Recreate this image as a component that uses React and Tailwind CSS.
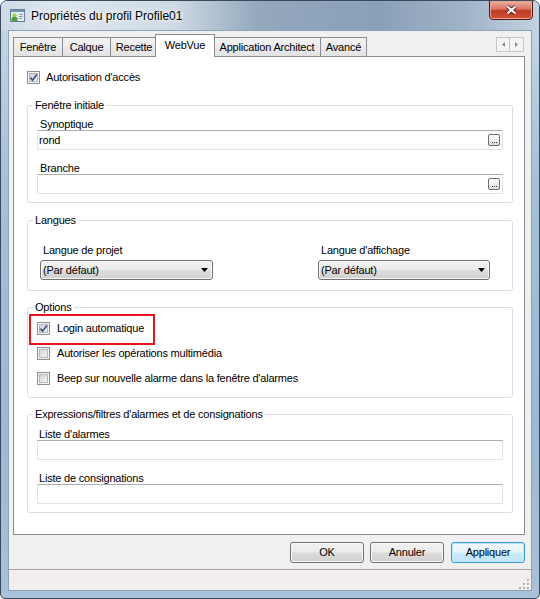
import React from "react";

const tabs = [
  { label: "Fenêtre", w: "w-[49px]" },
  { label: "Calque", w: "w-[48px]" },
  { label: "Recette", w: "w-[47px]" },
  { label: "WebVue", active: true },
  { label: "Application Architect", w: "w-[107px]" },
  { label: "Avancé", w: "w-[47px]", last: true },
];

function Checkbox({ checked }) {
  return (
    <span className="flex h-[13px] w-[13px] shrink-0 items-center justify-center border border-[#8e8f8f] bg-[linear-gradient(135deg,#c9ccd1_0%,#e6e7e9_55%,#f8f8f8_100%)] shadow-[inset_0_0_0_1px_#f4f4f4,inset_0_0_0_2px_#b4b8be]">
      {checked && (
        <svg width="9" height="9" viewBox="0 0 9 9">
          <path d="M1.4 4.6 L3.6 7.2 L7.8 1.4" stroke="#3f5385" strokeWidth="1.7" fill="none" />
        </svg>
      )}
    </span>
  );
}

function Group({ title, className, children }) {
  return (
    <fieldset className={`rounded-[3px] border border-[#d5dfe5] ${className}`}>
      <legend className="ml-[5px] px-[2px] leading-[14px]">{title}</legend>
      <div className="px-[9px]">{children}</div>
    </fieldset>
  );
}

function TextBox({ value, browse }) {
  return (
    <div className="flex h-[20px] items-center border border-[#dfe3ea] border-t-[#abadb3] bg-white pl-[1px] pr-[2px]">
      <span className="flex-1 leading-[14px]">{value}</span>
      {browse && (
        <span className="flex h-[12px] w-[12px] items-end justify-center gap-[1px] rounded-[2px] border border-[#6e6e6e] bg-[linear-gradient(180deg,#ffffff,#dedede)] pb-[2px]">
          <span className="h-px w-px bg-[#333]" />
          <span className="h-px w-px bg-[#333]" />
          <span className="h-px w-px bg-[#333]" />
        </span>
      )}
    </div>
  );
}

function Select({ w }) {
  return (
    <div
      className={`flex h-[20px] ${w} items-center rounded-[3px] border border-[#707070] bg-[linear-gradient(180deg,#f2f2f2_0%,#ebebeb_48%,#dddddd_52%,#cfcfcf_100%)] pl-[2px] pr-[4px] shadow-[inset_0_0_0_1px_#f8f8f8]`}
    >
      <span className="flex-1 leading-[14px]">(Par défaut)</span>
      <svg width="7" height="4" viewBox="0 0 7 4">
        <path d="M0 0 H7 L3.5 4 Z" fill="#000" />
      </svg>
    </div>
  );
}

function Button({ children, primary }) {
  return (
    <div
      className={
        primary
          ? "ml-px flex h-[21px] w-[74px] items-center justify-center rounded-[3px] border border-[#3c9ad6] bg-[linear-gradient(180deg,#f2fafe_0%,#e3f4fc_48%,#cdebfa_52%,#bfe4f7_100%)] shadow-[inset_0_0_0_1px_#b9e6fb]"
          : "flex h-[21px] w-[74px] items-center justify-center rounded-[3px] border border-[#707070] bg-[linear-gradient(180deg,#f2f2f2_0%,#ebebeb_48%,#dddddd_52%,#cfcfcf_100%)] shadow-[inset_0_0_0_1px_#fbfbfb]"
      }
    >
      {children}
    </div>
  );
}

function TitleBar() {
  return (
    <div className="flex h-[29px] shrink-0 items-center bg-[linear-gradient(90deg,#ccd9e6_0%,#dfe7ef_10%,#cfdae5_32%,#93a8bd_48%,#8aa0b7_70%,#9fb3c7_86%,#c4d2e0_100%)] pl-[9px]">
      <svg width="15" height="13" viewBox="0 0 15 13">
        <rect x="0.5" y="0.5" width="14" height="12" fill="#e4edf5" stroke="#6d8194" />
        <rect x="1" y="1" width="13" height="2" fill="#6f95bd" />
        <circle cx="4.5" cy="6.5" r="2.2" fill="#a6d04f" />
        <path d="M1.5 12 V9 Q4.5 6.5 7.5 9 V12 Z" fill="#4f9a3a" />
        <rect x="9" y="5" width="4" height="1" fill="#8d9cab" />
        <rect x="9" y="7" width="4" height="1" fill="#8d9cab" />
        <rect x="9" y="9" width="3" height="1" fill="#8d9cab" />
      </svg>
      <span className="ml-[6px] text-[12px] leading-[16px] tracking-normal [text-shadow:0_0_6px_#fff,0_0_3px_#fff]">
        Propriétés du profil Profile01
      </span>
      <div className="-mt-px mr-[6px] ml-auto flex h-[20px] w-[44px] items-center justify-center self-start rounded-b-[4px] border border-[#4f1a12] bg-[linear-gradient(180deg,#eab0a2_0%,#d9786a_42%,#c13b23_55%,#cf5233_100%)] shadow-[inset_0_0_0_1px_#efa493]">
        <svg width="13" height="10" viewBox="0 0 13 10">
          <path d="M2.5 1.5 L10.5 8.5 M10.5 1.5 L2.5 8.5" stroke="#5a1e16" strokeWidth="4" />
          <path d="M2.5 1.5 L10.5 8.5 M10.5 1.5 L2.5 8.5" stroke="#ffffff" strokeWidth="2.2" />
        </svg>
      </div>
    </div>
  );
}

function TabStrip() {
  return (
    <div className="flex h-[25px] shrink-0 items-end pl-[4px] pr-[7px]">
      {tabs.map((tab) =>
        tab.active ? (
          <div
            key={tab.label}
            className="relative z-10 -mx-[2px] -mb-px flex h-[23px] w-[60px] items-center justify-center border border-b-0 border-[#898c95] bg-white pb-[2px]"
          >
            {tab.label}
          </div>
        ) : (
          <div
            key={tab.label}
            className={`flex h-[19px] ${tab.w} items-center justify-center border-t border-l border-[#898c95] bg-[linear-gradient(180deg,#f3f3f3,#e3e3e3)] ${tab.last ? "border-r" : ""}`}
          >
            {tab.label}
          </div>
        )
      )}
      <div className="mt-[6px] ml-auto flex self-start">
        <div className="flex h-[15px] w-[14px] items-center justify-center border border-[#c7c7c7] bg-[#f4f4f4]">
          <svg width="3" height="5" viewBox="0 0 3 5">
            <path d="M3 0 V5 L0 2.5 Z" fill="#8a8a8a" />
          </svg>
        </div>
        <div className="flex h-[15px] w-[14px] items-center justify-center border border-l-0 border-[#c7c7c7] bg-[#f4f4f4]">
          <svg width="3" height="5" viewBox="0 0 3 5">
            <path d="M0 0 V5 L3 2.5 Z" fill="#8a8a8a" />
          </svg>
        </div>
      </div>
    </div>
  );
}

export default function App() {
  return (
    <div className="flex h-[599px] w-[540px] flex-col overflow-hidden rounded-t-[7px] rounded-b-[5px] border border-[#394a5d] bg-[linear-gradient(180deg,#c9d7e5_0%,#a6c0db_30%,#9db8d5_70%,#a9c1da_100%)] font-['Liberation_Sans',Arial,sans-serif] text-[11px] tracking-[-0.2px] text-black">
      <TitleBar />

      <div className="mx-[7px] flex flex-1 flex-col border border-[#8ea2b7] bg-[#f0f0f0]">
        <TabStrip />

        <div className="ml-[4px] flex h-[479px] w-[512px] shrink-0 flex-col border border-[#898c95] bg-white pt-[13px] pr-[11px] pl-[13px]">
          <label className="flex h-[14px] items-center gap-[6px] leading-[14px]">
            <Checkbox checked />
            Autorisation d'accès
          </label>

          <Group title="Fenêtre initiale" className="mt-[14px] pb-[8px]">
            <div className="mt-[6px] ml-[3px] leading-[12px]">Synoptique</div>
            <TextBox value="rond" browse />
            <div className="mt-[12px] ml-[3px] leading-[12px]">Branche</div>
            <TextBox browse />
          </Group>

          <Group title="Langues" className="mt-[10px] pb-[10px]">
            <div className="mt-[17px] flex gap-[105px] pl-[3px]">
              <div className="flex flex-col gap-[4px]">
                <span className="ml-[3px] leading-[12px]">Langue de projet</span>
                <Select w="w-[173px]" />
              </div>
              <div className="flex flex-col gap-[4px]">
                <span className="ml-[3px] leading-[12px]">Langue d'affichage</span>
                <Select w="w-[172px]" />
              </div>
            </div>
          </Group>

          <Group title="Options" className="mt-[9px] pb-[12px]">
            <div className="flex flex-col gap-[11px] pt-[7px]">
              <label className="relative flex h-[14px] items-center gap-[7px] leading-[14px]">
                <Checkbox checked />
                Login automatique
                <span className="absolute top-[-7px] left-[-8px] h-[31px] w-[126px] border-2 border-[#e5141f]" />
              </label>
              <label className="flex h-[14px] items-center gap-[7px] leading-[14px]">
                <Checkbox />
                Autoriser les opérations multimédia
              </label>
              <label className="flex h-[14px] items-center gap-[7px] leading-[14px]">
                <Checkbox />
                Beep sur nouvelle alarme dans la fenêtre d'alarmes
              </label>
            </div>
          </Group>

          <Group title="Expressions/filtres d'alarmes et de consignations" className="mt-[9px] pb-[8px]">
            <div className="mt-[7px] ml-[2px] leading-[12px]">Liste d'alarmes</div>
            <TextBox />
            <div className="mt-[12px] ml-[2px] leading-[12px]">Liste de consignations</div>
            <TextBox />
          </Group>
        </div>

        <div className="mt-[7px] flex h-[21px] shrink-0 justify-end gap-[6px] pr-[6px]">
          <Button>OK</Button>
          <Button>Annuler</Button>
          <Button primary>Appliquer</Button>
        </div>

        <div className="mt-[6px] flex flex-1 items-end justify-end border-t border-[#a3a3a3] bg-[#f1eeed] pr-px pb-px">
          <svg width="12" height="11" viewBox="0 0 12 11">
            {[
              [9, 1],
              [5, 5],
              [9, 5],
              [1, 9],
              [5, 9],
              [9, 9],
            ].map(([x, y]) => (
              <g key={`${x}-${y}`}>
                <rect x={x + 1} y={y + 1} width="2" height="2" fill="#ffffff" />
                <rect x={x} y={y} width="2" height="2" fill="#b5b2b0" />
              </g>
            ))}
          </svg>
        </div>
      </div>

      <div className="h-[7px] shrink-0" />
    </div>
  );
}
